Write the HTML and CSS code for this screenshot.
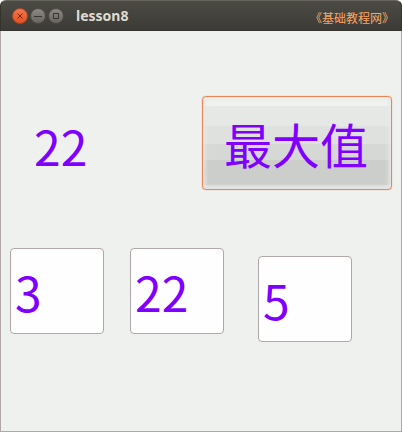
FILE: index.html
```html
<!DOCTYPE html>
<html lang="zh-CN">
<head>
<meta charset="utf-8">
<meta name="viewport" content="width=device-width, initial-scale=1">
<title>lesson8</title>
<link rel="stylesheet" href="styles.css">
</head>
<body>
<div class="window">
  <header class="titlebar">
    <div class="controls">
      <button class="control control-close" type="button" aria-label="Close">
        <svg viewBox="0 0 16 16"><path d="M5.500 5.500l5 5M10.500 5.500l-5 5"/></svg>
      </button>
      <button class="control" type="button" aria-label="Minimize">
        <svg viewBox="0 0 16 16"><path d="M4 8.500h8"/></svg>
      </button>
      <button class="control" type="button" aria-label="Maximize">
        <svg viewBox="0 0 16 16"><path d="M5.500 5.500h5v5h-5z"/></svg>
      </button>
    </div>
    <h1 class="title">lesson8</h1>
    <span class="source">《基础教程网》</span>
  </header>
  <main class="content">
    <div class="result-row">
      <output class="result" for="first second third">22</output>
      <button class="max-button" type="button">最大值</button>
    </div>
    <div class="fields">
      <input class="field" id="first" type="text" value="3" aria-label="First number">
      <input class="field" id="second" type="text" value="22" aria-label="Second number">
      <input class="field field-last" id="third" type="text" value="5" aria-label="Third number">
    </div>
  </main>
</div>
</body>
</html>
```
FILE: styles.css
```css
* {
  box-sizing: border-box;
}

body {
  margin: 0;
  background: #fff;
  font-family: "Noto Sans CJK SC", "Noto Sans", sans-serif;
}

.window {
  display: flex;
  flex-direction: column;
  min-height: 100vh;
  border: 1px solid #b0a8a8;
  border-top: 0;
  border-radius: 6px 6px 0 0;
  background: #eff1ee;
}

.titlebar {
  display: flex;
  align-items: center;
  height: 31px;
  margin: 0 -1px;
  padding: 1px 13px 0 11px;
  border: 1px solid #35342f;
  border-top-color: #66645c;
  border-radius: 6px 6px 0 0;
  background: linear-gradient(#4b4a43, #3c3b37);
}

.controls {
  display: flex;
  gap: 2px;
}

.control {
  width: 16px;
  height: 16px;
  padding: 0;
  border: 1px solid #4a4943;
  border-radius: 50%;
  background: linear-gradient(#8b8980, #66645d);
}

.control-close {
  border-color: #a8492a;
  background: linear-gradient(#f4784e, #e2501f);
}

.control svg {
  display: block;
  width: 16px;
  height: 16px;
  margin: -1px;
  fill: none;
  stroke: #35342f;
}

.control-close svg {
  stroke: #7a2408;
}

.title {
  flex: 1;
  margin: 0 0 0 12px;
  color: #dfdbd2;
  font: bold 14px/20px "Noto Sans", sans-serif;
}

.source {
  margin-top: 4px;
  color: #fba763;
  font-size: 12px;
  line-height: 16px;
  font-feature-settings: "halt";
}

.content {
  flex: 1;
  padding: 65px 9px 0;
}

.result-row {
  display: flex;
  align-items: center;
  justify-content: space-between;
}

.result,
.max-button,
.field {
  color: #8000ff;
  font-family: inherit;
  font-size: 48px;
  line-height: 72px;
}

.result {
  padding: 4px 0 0 24px;
}

.max-button {
  height: 94px;
  padding: 0 23px 0 21px;
  border: 1px solid #ec8458;
  border-radius: 4px;
  background: linear-gradient(#f0f2ef 0 10%, #e6e8e5 10% 31%, #dfe1de 31% 51%, #d6d8d5 51% 69%, #cccecb 69% 96%, #d8dad7 96%);
  box-shadow: inset 0 0 4px 2px #e8eae7, 0 0 1px #ec8458;
}

.fields {
  display: grid;
  grid-template-columns: repeat(3, 1fr);
  align-items: start;
  gap: 26px;
  margin: 58px 48px 0 0;
}

.field {
  width: 100%;
  height: 86px;
  padding: 0 4px;
  border: 1px solid #b0a8a8;
  border-radius: 4px;
  background: #fefefe;
}

.field-last {
  margin: 8px 0 0 8px;
}
```
